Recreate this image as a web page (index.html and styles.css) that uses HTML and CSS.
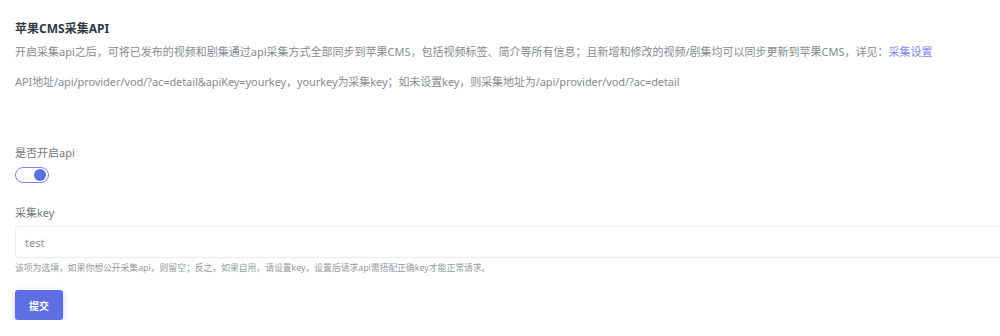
FILE: index.html
```html
<!DOCTYPE html>
<html lang="zh-CN">
<head>
    <meta charset="UTF-8">
    <meta name="viewport" content="width=device-width, initial-scale=1.0">
    <title>苹果CMS采集API</title>
    <link rel="stylesheet" href="styles.css">
</head>
<body>
    <div class="page">
        <h4 class="header-title">苹果CMS采集API</h4>
        <p class="text-muted">开启采集api之后，可将已发布的视频和剧集通过api采集方式全部同步到苹果CMS，包括视频标签、简介等所有信息；且新增和修改的视频/剧集均可以同步更新到苹果CMS，详见：<a href="#">采集设置</a></p>
        <p class="text-muted api-line">API地址/api/provider/vod/?ac=detail&amp;apiKey=yourkey，yourkey为采集key；如未设置key，则采集地址为/api/provider/vod/?ac=detail</p>

        <form class="settings-form">
            <div class="form-group">
                <label class="form-label">是否开启api</label>
                <span class="switch"><span class="switch-knob"></span></span>
            </div>
            <div class="form-group">
                <label class="form-label" for="apikey">采集key</label>
                <input class="form-control" id="apikey" type="text" value="test">
                <span class="help-text">该项为选填，如果你想公开采集api，则留空；反之，如果自用，请设置key，设置后请求api需搭配正确key才能正常请求。</span>
            </div>
            <button class="btn-primary" type="button">提交</button>
        </form>
    </div>
</body>
</html>
```

FILE: styles.css
```css
body {
    margin: 0;
    background-color: #ffffff;
    font-family: 'Noto Sans', 'Noto Sans CJK SC', sans-serif;
    color: #6c757d;
    overflow: hidden;
}
.page {
    padding: 21px 0 0 15px;
    width: 1010px;
}
.header-title {
    margin: 0 0 7px;
    font-size: 12px;
    line-height: 16px;
    font-weight: 700;
    color: #313a46;
}
.text-muted {
    margin: 0;
    font-size: 11px;
    line-height: 16px;
    color: #868b92;
    white-space: nowrap;
}
.text-muted a {
    color: #8088ec;
    text-decoration: none;
}
.api-line {
    margin-top: 14px;
    letter-spacing: -0.08px;
}
.settings-form {
    margin-top: 55px;
}
.form-group {
    display: flex;
    flex-direction: column;
    align-items: flex-start;
    margin-bottom: 22px;
}
.form-label {
    font-size: 11px;
    line-height: 16px;
    color: #737980;
    margin-bottom: 6px;
}
.form-group .form-label[for] {
    margin-bottom: 5px;
}
.switch {
    box-sizing: border-box;
    width: 34px;
    height: 16px;
    border: 1px solid #7b86ee;
    border-radius: 8px;
    display: flex;
    align-items: center;
    justify-content: flex-end;
    padding-right: 2px;
}
.switch-knob {
    width: 12px;
    height: 12px;
    border-radius: 50%;
    background: #5b6ee3;
}
.form-control {
    box-sizing: border-box;
    width: 100%;
    height: 32px;
    padding: 0 9px;
    border: 1px solid #e3eef8;
    border-radius: 3px;
    font-family: inherit;
    font-size: 11px;
    color: #8a9096;
    outline: none;
}
.help-text {
    margin-top: 4px;
    font-size: 8.8px;
    line-height: 12px;
    color: #949aa0;
}
.btn-primary {
    display: block;
    margin-top: -6px;
    width: 48px;
    height: 30px;
    border: none;
    border-radius: 3px;
    background: #5e6ee3;
    color: #ffffff;
    font-family: inherit;
    font-size: 10px;
    font-weight: 700;
    box-shadow: 0 2px 6px rgba(94, 110, 227, 0.35);
}
```
